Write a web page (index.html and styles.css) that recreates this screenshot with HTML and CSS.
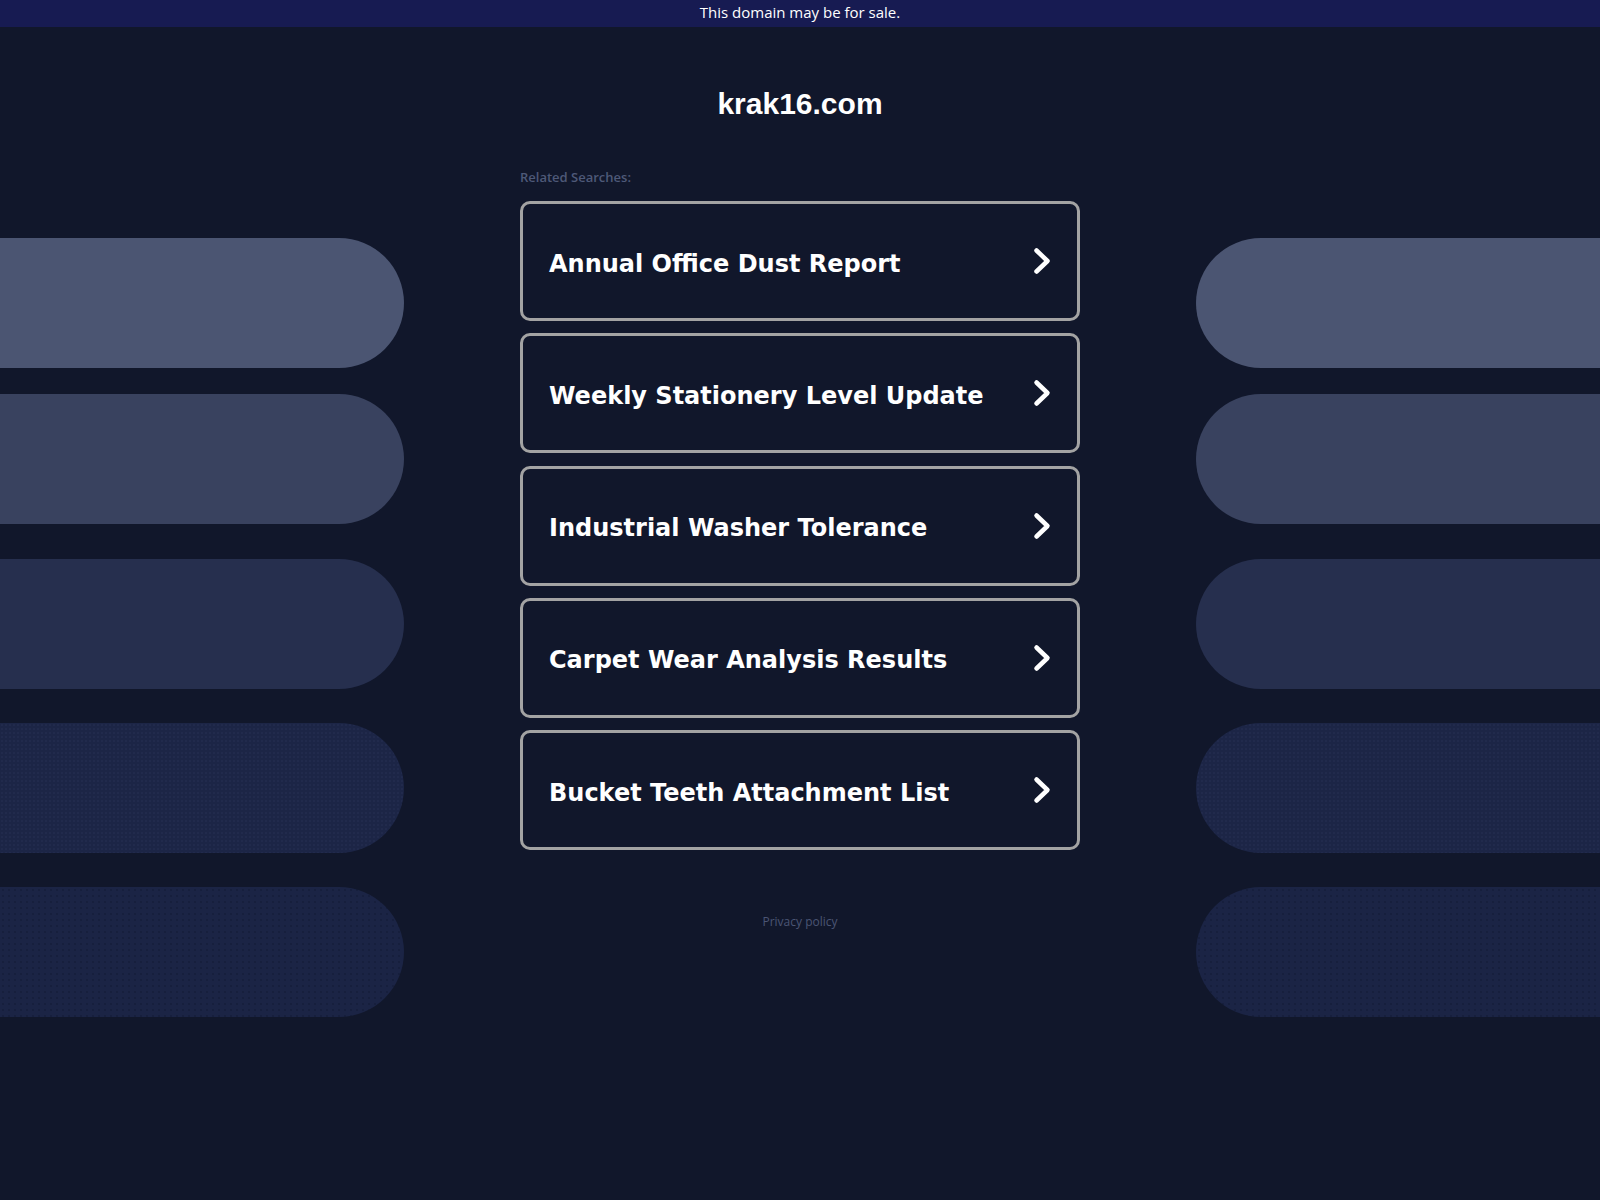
FILE: index.html
```html
<!DOCTYPE html>
<html lang="en">
<head>
<meta charset="utf-8">
<title>krak16.com</title>
<link rel="stylesheet" href="styles.css">
</head>
<body>
<div class="banner">This domain may be for sale.</div>
<div class="main">
  <div class="decor decor-left">
    <div class="pill pill-1"></div>
    <div class="pill pill-2"></div>
    <div class="pill pill-3"></div>
    <div class="pill pill-4"></div>
    <div class="pill pill-5"></div>
  </div>
  <div class="center">
    <h1 class="domain">krak16.com</h1>
    <div class="related">Related Searches:</div>
    <div class="links">
      <a class="link" href="#"><span class="link-text">Annual Office Dust Report</span><svg class="chev" width="18" height="28" viewBox="0 0 18 28"><polyline points="3.5,3.5 14.5,14 3.5,24.5"/></svg></a>
      <a class="link" href="#"><span class="link-text">Weekly Stationery Level Update</span><svg class="chev" width="18" height="28" viewBox="0 0 18 28"><polyline points="3.5,3.5 14.5,14 3.5,24.5"/></svg></a>
      <a class="link" href="#"><span class="link-text">Industrial Washer Tolerance</span><svg class="chev" width="18" height="28" viewBox="0 0 18 28"><polyline points="3.5,3.5 14.5,14 3.5,24.5"/></svg></a>
      <a class="link" href="#"><span class="link-text">Carpet Wear Analysis Results</span><svg class="chev" width="18" height="28" viewBox="0 0 18 28"><polyline points="3.5,3.5 14.5,14 3.5,24.5"/></svg></a>
      <a class="link" href="#"><span class="link-text">Bucket Teeth Attachment List</span><svg class="chev" width="18" height="28" viewBox="0 0 18 28"><polyline points="3.5,3.5 14.5,14 3.5,24.5"/></svg></a>
    </div>
    <div class="privacy"><a href="#">Privacy policy</a></div>
  </div>
  <div class="decor decor-right">
    <div class="pill pill-1"></div>
    <div class="pill pill-2"></div>
    <div class="pill pill-3"></div>
    <div class="pill pill-4"></div>
    <div class="pill pill-5"></div>
  </div>
</div>
</body>
</html>
```
FILE: styles.css
```css
html, body {
  margin: 0;
  padding: 0;
  background: #11172b;
  min-height: 1200px;
}

.banner {
  height: 27px;
  background: #171b52;
  color: #ffffff;
  font-family: "Open Sans", "Noto Sans", sans-serif;
  font-size: 15px;
  font-weight: 500;
  line-height: 25px;
  text-align: center;
}

.main {
  display: grid;
  grid-template-columns: 520px 560px 520px;
}

.decor {
  display: flex;
  flex-direction: column;
  padding-top: 211px;
}

.pill {
  width: 404px;
  height: 130px;
}

.decor-left .pill {
  border-radius: 0 65px 65px 0;
}

.decor-right {
  align-items: flex-end;
}

.decor-right .pill {
  border-radius: 65px 0 0 65px;
}

.pill-1 { background: #4b5572; }
.pill-2 { background: #39425f; margin-top: 26px; }
.pill-3 { background: #262f4e; margin-top: 35px; }
.pill-4 {
  margin-top: 34px;
  background-color: #1c2546;
  background-image: radial-gradient(circle, #26305280 0.8px, transparent 1.2px);
  background-size: 4px 4px;
}
.pill-5 {
  margin-top: 34px;
  background-color: #1b2445;
  background-image: radial-gradient(circle, #131a3680 0.9px, transparent 1.4px);
  background-size: 6px 6px;
}

.center {
  display: flex;
  flex-direction: column;
}

.domain {
  margin: 59px 0 0;
  font-family: "Liberation Sans", Arial, sans-serif;
  font-size: 30px;
  font-weight: 700;
  line-height: 36px;
  color: #ffffff;
  text-align: center;
}

.related {
  margin-top: 47px;
  font-family: "Open Sans", "Noto Sans", sans-serif;
  font-size: 13px;
  font-weight: 600;
  line-height: 17px;
  color: #4e5978;
}

.links {
  display: flex;
  flex-direction: column;
  gap: 12.3px;
  margin-top: 15px;
}

.link {
  display: flex;
  align-items: center;
  justify-content: space-between;
  height: 120px;
  box-sizing: border-box;
  border: 3px solid #a3a3a3;
  border-radius: 10px;
  padding: 0 26px 0 26px;
  text-decoration: none;
  color: #ffffff;
}

.link-text {
  font-family: "DejaVu Sans", Verdana, sans-serif;
  font-size: 24px;
  font-weight: 700;
  line-height: 30px;
  margin-top: 5px;
}

.chev {
  flex: none;
}

.chev polyline {
  fill: none;
  stroke: #ffffff;
  stroke-width: 4.5;
  stroke-linecap: round;
  stroke-linejoin: round;
}

.privacy {
  margin-top: 64px;
  text-align: center;
  font-family: "Open Sans", "Noto Sans", sans-serif;
  font-size: 12px;
  line-height: 15px;
}

.privacy a {
  color: #4b5574;
  text-decoration: none;
}
```
